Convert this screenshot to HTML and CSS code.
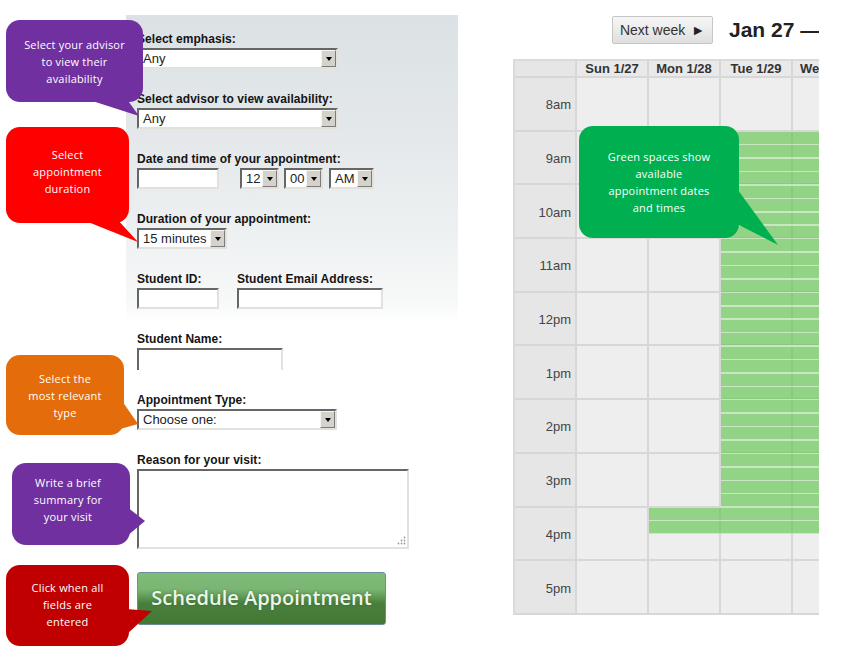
FILE: index.html
```html
<!DOCTYPE html>
<html lang="en">
<head>
<meta charset="utf-8">
<title>Schedule Appointment</title>
<link rel="stylesheet" href="styles.css">
</head>
<body>
<div class="page">
  <form class="form">
    <div class="field">
      <div class="label">Select emphasis:</div>
      <div class="sel w-201"><span class="val">Any</span><span class="btn"><i class="tri"></i></span></div>
    </div>
    <div class="field">
      <div class="label">Select advisor to view availability:</div>
      <div class="sel w-201"><span class="val">Any</span><span class="btn"><i class="tri"></i></span></div>
    </div>
    <div class="field">
      <div class="label">Date and time of your appointment:</div>
      <div class="row">
        <div class="inp w-82 gap-21"></div>
        <div class="sel w-39 gap-5"><span class="val">12</span><span class="btn"><i class="tri"></i></span></div>
        <div class="sel w-39 gap-6"><span class="val">00</span><span class="btn"><i class="tri"></i></span></div>
        <div class="sel w-45"><span class="val">AM</span><span class="btn"><i class="tri"></i></span></div>
      </div>
    </div>
    <div class="field">
      <div class="label">Duration of your appointment:</div>
      <div class="sel w-90"><span class="val">15 minutes</span><span class="btn"><i class="tri"></i></span></div>
    </div>
    <div class="field row">
      <div class="col-id">
        <div class="label">Student ID:</div>
        <div class="inp w-82"></div>
      </div>
      <div class="col-email">
        <div class="label">Student Email Address:</div>
        <div class="inp w-146"></div>
      </div>
    </div>
    <div class="field">
      <div class="label">Student Name:</div>
      <div class="inp w-146 cut"></div>
    </div>
    <div class="field">
      <div class="label">Appointment Type:</div>
      <div class="sel w-200"><span class="val">Choose one:</span><span class="btn"><i class="tri"></i></span></div>
    </div>
    <div class="field">
      <div class="label">Reason for your visit:</div>
      <div class="ta">
        <svg class="grip" width="10" height="10" viewBox="0 0 10 10"><circle cx="8.5" cy="1.5" r="0.9"/><circle cx="5.5" cy="4.5" r="0.9"/><circle cx="8.5" cy="4.5" r="0.9"/><circle cx="2.5" cy="7.5" r="0.9"/><circle cx="5.5" cy="7.5" r="0.9"/><circle cx="8.5" cy="7.5" r="0.9"/></svg>
      </div>
    </div>
    <button type="button" class="submit">Schedule Appointment</button>
  </form>

  <section class="cal-wrap">
    <div class="cal-top">
      <button type="button" class="next">Next week <span class="arr">&#9658;</span></button>
      <h1 class="range">Jan 27 — Feb 2, 2013</h1>
    </div>
    <div class="cal">
      <div class="c h t0"></div><div class="c h">Sun 1/27</div><div class="c h">Mon 1/28</div><div class="c h">Tue 1/29</div><div class="c h">Wed 1/30</div>
      <div class="c t">8am</div><div class="c"></div><div class="c"></div><div class="c"></div><div class="c"></div>
      <div class="c t">9am</div><div class="c"></div><div class="c"></div><div class="c"></div><div class="c"></div>
      <div class="c t">10am</div><div class="c"></div><div class="c"></div><div class="c"></div><div class="c"></div>
      <div class="c t">11am</div><div class="c"></div><div class="c"></div><div class="c"></div><div class="c"></div>
      <div class="c t">12pm</div><div class="c"></div><div class="c"></div><div class="c"></div><div class="c"></div>
      <div class="c t">1pm</div><div class="c"></div><div class="c"></div><div class="c"></div><div class="c"></div>
      <div class="c t">2pm</div><div class="c"></div><div class="c"></div><div class="c"></div><div class="c"></div>
      <div class="c t">3pm</div><div class="c"></div><div class="c"></div><div class="c"></div><div class="c"></div>
      <div class="c t">4pm</div><div class="c"></div><div class="c"></div><div class="c"></div><div class="c"></div>
      <div class="c t">5pm</div><div class="c"></div><div class="c"></div><div class="c"></div><div class="c"></div>
      <div class="avail av-tue"></div>
      <div class="avail av-mon"></div>
    </div>
  </section>
</div>

<svg class="tails" width="860" height="653" viewBox="0 0 860 653">
  <polygon points="83,98 126,98 139,116" fill="#7030a0"/>
  <polygon points="78,218 116,218 138,242" fill="#ff0000"/>
  <polygon points="120,398 138,424 120,429" fill="#e46c0a"/>
  <polygon points="127,507 145,521 127,536" fill="#7030a0"/>
  <polygon points="126,609 152,611 126,635" fill="#c00000"/>
  <polygon points="735,186 778,245 735,223" fill="#00b050"/>
</svg>
<div class="callout co-1">Select your advisor<br>to view their<br>availability</div>
<div class="callout co-2">Select<br>appointment<br>duration</div>
<div class="callout co-3">Select the<br>most relevant<br>type</div>
<div class="callout co-4">Write a brief<br>summary for<br>your visit</div>
<div class="callout co-5">Click when all<br>fields are<br>entered</div>
<div class="callout co-6">Green spaces show<br>available<br>appointment dates<br>and times</div>
</body>
</html>
```

FILE: styles.css
```css
html, body {
  margin: 0;
  padding: 0;
}
body {
  width: 860px;
  height: 653px;
  overflow: hidden;
  position: relative;
  background: #fff;
  font-family: "Liberation Sans", Arial, sans-serif;
  color: #111;
}

.page {
  display: flex;
  align-items: flex-start;
  padding-top: 15px;
}

/* ---------- form ---------- */
.form {
  margin: 0 0 0 126px;
  width: 332px;
  box-sizing: border-box;
  padding: 17px 0 0 11px;
  background-image: linear-gradient(to bottom, #dbe1e4 0px, #e4e8ea 120px, #eef1f2 220px, #f8f9f9 290px, #ffffff 305px);
  background-repeat: no-repeat;
  background-size: 100% 305px;
}
.field {
  margin-bottom: 23px;
}
.label {
  font-size: 12px;
  font-weight: bold;
  line-height: 14px;
  margin-bottom: 2px;
  color: #141414;
  letter-spacing: 0.05px;
  white-space: nowrap;
}
.row {
  display: flex;
}
.col-id { width: 100px; }

.sel, .inp, .ta {
  box-sizing: border-box;
  border: 2px solid;
  border-color: #666 #e3e1db #e3e1db #666;
  background: #fff;
}
.sel {
  display: flex;
  height: 21px;
  font-size: 13px;
  color: #222;
}
.sel .val {
  flex: 1;
  padding-left: 4px;
  line-height: 17px;
  white-space: nowrap;
  overflow: hidden;
}
.sel .btn {
  width: 15px;
  box-sizing: border-box;
  background: #d5d2cb;
  border: 1px solid;
  border-color: #f6f5f1 #7b7b7b #7b7b7b #f6f5f1;
  display: flex;
  align-items: center;
  justify-content: center;
}
.tri {
  display: block;
  width: 0;
  height: 0;
  border-left: 3px solid transparent;
  border-right: 3px solid transparent;
  border-top: 4px solid #000;
}
.inp { height: 21px; }
.inp.cut { height: 22px; border-bottom: none; }

.w-201 { width: 201px; }
.w-200 { width: 200px; }
.w-90 { width: 90px; }
.w-82 { width: 82px; }
.w-146 { width: 146px; }
.w-39 { width: 39px; }
.w-45 { width: 45px; }
.gap-21 { margin-right: 21px; }
.gap-5 { margin-right: 5px; }
.gap-6 { margin-right: 6px; }

.ta {
  width: 272px;
  height: 80px;
  display: flex;
  align-items: flex-end;
  justify-content: flex-end;
  padding: 0 1px 1px 0;
}
.grip { fill: #9a9a9a; }

.submit {
  display: block;
  width: 249px;
  height: 53px;
  margin: 2px 0 0 0;
  padding: 0 0 2px 0;
  border: 1px solid #6c8e9c;
  border-radius: 3px;
  background: linear-gradient(to bottom, #80bc79 0px, #7ab573 16px, #5f9a55 24px, #487f3c 30px, #437935 52px);
  color: #eef5ea;
  font-family: "Open Sans", "Liberation Sans", sans-serif;
  font-weight: 600;
  font-size: 20px;
  text-shadow: 0 0 2px rgba(40, 80, 30, 0.6);
}

/* ---------- calendar ---------- */
.cal-wrap {
  margin-left: 55px;
  width: 306px;
  overflow: hidden;
}
.cal-top {
  height: 44px;
  display: flex;
  align-items: center;
  box-sizing: border-box;
  padding-bottom: 15px;
  white-space: nowrap;
}
.next {
  margin: 0 0 0 99px;
  width: 101px;
  height: 28px;
  flex: none;
  padding: 0;
  border: 1px solid #c6c6c6;
  border-radius: 2px;
  background: linear-gradient(to bottom, #f6f6f6, #ebebeb 50%, #dfdfdf);
  font-family: "Liberation Sans", Arial, sans-serif;
  font-size: 14px;
  color: #333;
}
.next .arr {
  font-size: 14px;
  margin-left: 2px;
  color: #222;
}
.range {
  margin: 0 0 0 16px;
  font-size: 21px;
  font-weight: bold;
  color: #222;
  line-height: 28px;
  white-space: nowrap;
}

.cal {
  position: relative;
  display: grid;
  grid-template-columns: 62px repeat(4, 72px);
  grid-template-rows: 17px repeat(10, 53.7px);
  width: max-content;
  border-top: 2px solid #dadada;
  border-left: 2px solid #dadada;
}
.c {
  box-sizing: border-box;
  border-right: 2px solid #d7d7d7;
  border-bottom: 2px solid #d7d7d7;
  background: #eeeeee;
}
.h {
  background: #e9e9e9;
  font-size: 13px;
  font-weight: bold;
  color: #333;
  text-align: center;
  line-height: 16px;
  white-space: nowrap;
}
.t0 { background: #e6e6e6; }
.t {
  background: #e6e6e6;
  display: flex;
  align-items: center;
  justify-content: flex-end;
  padding: 2px 4px 0 0;
  font-size: 13px;
  color: #444;
}
.avail {
  position: absolute;
  background: repeating-linear-gradient(to bottom, rgba(86, 193, 63, 0.6) 0px, rgba(86, 193, 63, 0.6) 11.9px, rgba(198, 231, 190, 0.95) 11.9px, rgba(198, 231, 190, 0.95) 13.425px);
}
.av-tue {
  left: 206px;
  top: 70.7px;
  width: 150px;
  height: 402.75px;
}
.av-mon {
  left: 134px;
  top: 446.6px;
  width: 72px;
  height: 26.85px;
}

/* ---------- callouts ---------- */
.tails {
  position: absolute;
  left: 0;
  top: 0;
}
.callout {
  position: absolute;
  box-sizing: border-box;
  border-radius: 14px;
  display: flex;
  align-items: center;
  justify-content: center;
  text-align: center;
  color: #fff;
  font-family: "Open Sans", "Liberation Sans", sans-serif;
  font-size: 11px;
  line-height: 17px;
  letter-spacing: 0.2px;
}
.co-1 { left: 6px; top: 20px; width: 137px; height: 82px; background: #7030a0; }
.co-2 { left: 6px; top: 127px; width: 123px; height: 96px; background: #ff0000; padding-bottom: 8px; }
.co-3 { left: 6px; top: 355px; width: 118px; height: 80px; background: #e46c0a; }
.co-4 { left: 12px; top: 463px; width: 118px; height: 82px; background: #7030a0; padding: 0 6px 10px 0; }
.co-5 { left: 6px; top: 565px; width: 123px; height: 81px; background: #c00000; padding-bottom: 3px; }
.co-6 { left: 579px; top: 126px; width: 160px; height: 112px; background: #00b050; }
```
